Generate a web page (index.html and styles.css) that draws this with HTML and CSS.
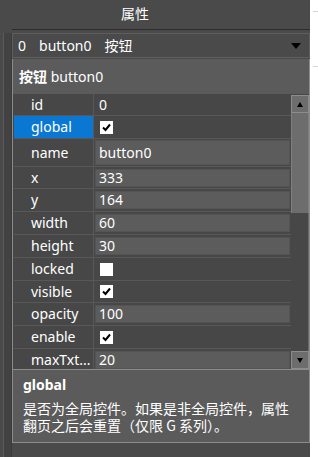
FILE: index.html
```html
<!DOCTYPE html>
<html>
<head>
<meta charset="utf-8">
<link rel="stylesheet" href="styles.css">
</head>
<body>
<div class="window">
  <div class="dock">
    <div class="title">属性</div>
    <div class="body">
      <div class="side"><div class="side-bar"></div></div>
      <div class="main">
        <div class="select">
          <span class="sel-id">0</span>
          <span class="sel-name">button0</span>
          <span class="sel-type">按钮</span>
          <span class="caret"></span>
        </div>
        <div class="panel">
          <div class="panel-head"><b>按钮</b> button0</div>
          <div class="grid">
            <div class="rows">
              <div class="row short"><div class="key">id</div><div class="val"><span class="plain">0</span></div></div>
              <div class="row"><div class="key selected">global</div><div class="val"><span class="check on"><svg viewBox="0 0 13 13" width="13" height="13"><path d="M3 6.5 L5.5 9 L10 3.5" fill="none" stroke="#000" stroke-width="2"/></svg></span></div></div>
              <div class="row tall"><div class="key">name</div><div class="val"><span class="box">button0</span></div></div>
              <div class="row short"><div class="key">x</div><div class="val"><span class="box">333</span></div></div>
              <div class="row"><div class="key">y</div><div class="val"><span class="box">164</span></div></div>
              <div class="row"><div class="key">width</div><div class="val"><span class="box">60</span></div></div>
              <div class="row"><div class="key">height</div><div class="val"><span class="box">30</span></div></div>
              <div class="row"><div class="key">locked</div><div class="val"><span class="check"></span></div></div>
              <div class="row short"><div class="key">visible</div><div class="val"><span class="check on"><svg viewBox="0 0 13 13" width="13" height="13"><path d="M3 6.5 L5.5 9 L10 3.5" fill="none" stroke="#000" stroke-width="2"/></svg></span></div></div>
              <div class="row"><div class="key">opacity</div><div class="val"><span class="box">100</span></div></div>
              <div class="row"><div class="key">enable</div><div class="val"><span class="check on"><svg viewBox="0 0 13 13" width="13" height="13"><path d="M3 6.5 L5.5 9 L10 3.5" fill="none" stroke="#000" stroke-width="2"/></svg></span></div></div>
              <div class="row"><div class="key">maxTxt...</div><div class="val"><span class="box">20</span></div></div>
            </div>
            <div class="scrollbar">
              <div class="sb-btn"><svg viewBox="0 0 16 16" width="16" height="16"><polygon points="5,11 11,11 8,6" fill="#000"/></svg></div>
              <div class="sb-thumb"></div>
              <div class="sb-track"></div>
              <div class="sb-btn"><svg viewBox="0 0 16 16" width="16" height="16"><polygon points="5,6 11,6 8,11" fill="#000"/></svg></div>
            </div>
          </div>
          <div class="desc">
            <div class="desc-title">global</div>
            <div class="desc-line first">是否为全局控件。如果是非全局控件，属性</div>
            <div class="desc-line">翻页之后会重置（仅限 G 系列）。</div>
          </div>
        </div>
      </div>
    </div>
  </div>
  <div class="edge">
    <div class="edge-line"></div>
    <div class="edge-line second"></div>
  </div>
</div>
</body>
</html>
```

FILE: styles.css
```css
* {
  box-sizing: border-box;
  margin: 0;
  padding: 0;
}

html, body {
  width: 318px;
  height: 457px;
  overflow: hidden;
}

body {
  background: #ffffff;
  font-family: "Noto Sans", "Noto Sans CJK SC", sans-serif;
  font-size: 14px;
  color: #ffffff;
}

.window {
  display: flex;
  width: 318px;
  height: 457px;
}

.dock {
  width: 310px;
  display: flex;
  flex-direction: column;
  background: #4a4a4a;
}

.title {
  height: 29px;
  line-height: 27px;
  padding-left: 121px;
}

.body {
  flex: 1;
  display: flex;
  min-height: 0;
}

.side {
  width: 12px;
  display: flex;
  padding-left: 3px;
  padding-top: 4px;
}

.side-bar {
  flex: 1;
  background: #424242;
  border-left: 1px solid #5a5a5a;
  border-right: 1px solid #3a3a3a;
}

.main {
  width: 298px;
  display: flex;
  flex-direction: column;
  border-top: 1px solid #2c2c2c;
}

.select {
  height: 25px;
  margin-top: 3px;
  border: 1px solid #5e5e5e;
  display: flex;
  align-items: center;
  padding-left: 5px;
  line-height: 20px;
}

.sel-id {
  margin-right: 13px;
}

.sel-name {
  margin-right: 13px;
}

.caret {
  margin-left: auto;
  margin-right: 8px;
  width: 0;
  height: 0;
  border-left: 5px solid transparent;
  border-right: 5px solid transparent;
  border-top: 6px solid #000;
}

.panel {
  margin-top: 1px;
  height: 384px;
  background: #5b5b5b;
  border-left: 1px solid #8c8c8c;
  border-right: 1px solid #8c8c8c;
  border-bottom: 1px solid #8c8c8c;
  display: flex;
  flex-direction: column;
}

.panel-head {
  height: 35px;
  line-height: 35px;
  padding-left: 6px;
}

.panel-head b {
  font-weight: 700;
}

.grid {
  height: 275px;
  display: flex;
  background: #474747;
  overflow: hidden;
}

.rows {
  width: 277px;
  margin-left: 1px;
  display: flex;
  flex-direction: column;
}

.row {
  height: 23px;
  flex: none;
  display: flex;
  border-bottom: 1px solid #585858;
}

.row.short {
  height: 22px;
}

.row.tall {
  height: 28px;
}

.key {
  width: 80px;
  padding-left: 17px;
  border-right: 1px solid #585858;
  display: flex;
  align-items: center;
  line-height: 18px;
  white-space: nowrap;
}

.key.selected {
  background: #0a78d2;
}

.val {
  flex: 1;
  display: flex;
  align-items: center;
  line-height: 16px;
}

.plain {
  padding-left: 5px;
}

.box {
  flex: 1;
  height: 18px;
  margin: 0 1px;
  padding-left: 3px;
  background: #5c5c5c;
  border: 1px solid #545454;
  display: flex;
  align-items: center;
}

.row.tall .box {
  height: 25px;
}

.check {
  width: 13px;
  height: 13px;
  margin-left: 6px;
  background: #ffffff;
  display: block;
}

.check svg {
  display: block;
}

.scrollbar {
  width: 18px;
  padding-top: 1px;
  display: flex;
  flex-direction: column;
}

.sb-btn {
  height: 18px;
  flex: none;
  background: #6d6d6d;
  border: 1px solid #8c8c8c;
}

.sb-btn svg {
  display: block;
}

.sb-thumb {
  height: 100px;
  flex: none;
  background: #6d6d6d;
  border-left: 1px solid #7f7f7f;
  border-right: 1px solid #7f7f7f;
}

.sb-track {
  flex: 1;
  border-right: 1px solid #6a6a6a;
}

.desc {
  flex: 1;
  border-top: 1px solid #8c8c8c;
  padding: 5px 10px 0 10px;
}

.desc-title {
  font-weight: 700;
  line-height: 20px;
}

.desc-line {
  height: 17px;
  line-height: 17px;
  white-space: nowrap;
  font-family: "Noto Sans CJK SC", sans-serif;
}

.desc-line.first {
  margin-top: 5px;
}

.edge {
  width: 8px;
  background: #ffffff;
  padding-top: 11px;
  padding-left: 3px;
}

.edge-line {
  height: 1px;
  background: #d4d4d4;
}

.edge-line.second {
  margin-top: 54px;
}
```
